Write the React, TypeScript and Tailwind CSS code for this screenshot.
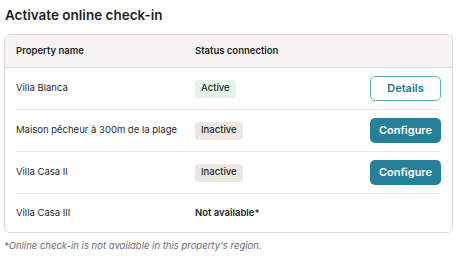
const rows = [
  { id: 1, name: 'Villa Blanca', status: 'active' },
  { id: 2, name: 'Maison pêcheur à 300m de la plage', status: 'inactive' },
  { id: 3, name: 'Villa Casa II', status: 'inactive' },
  { id: 4, name: 'Villa Casa III', status: 'unavailable' },
];

const App = () => {
  return (
    <div className="w-[457px] h-[261px] bg-white px-[4px] pt-[6px] text-[#1f1f1f]" style={{ fontFamily: 'Inter, "Noto Sans", sans-serif' }}>
      <h1 className="text-[13.5px] font-semibold leading-[18px] pl-[1px]">Activate online check-in</h1>
      <div className="mt-[10px] w-[449px] rounded-[6px] border border-[#dcdad7] overflow-hidden">
        <div className="flex items-center h-[33px] bg-[#f4f3f1] border-b border-[#e2e0dd] px-[11px] text-[9.5px] font-semibold">
          <div className="w-[179px]">Property name</div>
          <div>Status connection</div>
        </div>
        <div className="px-[11px]">
          {rows.map((row, i) => (
            <div
              key={row.id}
              className={`flex items-center text-[9.5px] ${i < rows.length - 1 ? 'h-[42px] border-b border-[#ebe9e6]' : 'h-[38px]'}`}
            >
              <div className="w-[179px] whitespace-nowrap text-[#2a2a2a]">{row.name}</div>
              <div className="flex-1">
                {row.status === 'active' && (
                  <span className="inline-flex items-center h-[18px] px-[6px] rounded-[4px] bg-[#e6f4e8] font-medium">Active</span>
                )}
                {row.status === 'inactive' && (
                  <span className="inline-flex items-center h-[18px] px-[6px] rounded-[4px] bg-[#ebe8e4] font-medium">Inactive</span>
                )}
                {row.status === 'unavailable' && <span className="font-semibold">Not available*</span>}
              </div>
              {row.status === 'active' && (
                <button className="w-[71px] h-[25px] rounded-[5px] border border-[#6aaec2] text-[#23758f] text-[11px] font-semibold">
                  Details
                </button>
              )}
              {row.status === 'inactive' && (
                <button className="w-[71px] h-[25px] rounded-[5px] bg-[#27809a] text-white text-[11px] font-semibold">
                  Configure
                </button>
              )}
            </div>
          ))}
        </div>
      </div>
      <p className="mt-[6px] text-[9.5px] italic text-[#6b6b6b]">*Online check-in is not available in this property's region.</p>
    </div>
  );
};

export default App;
